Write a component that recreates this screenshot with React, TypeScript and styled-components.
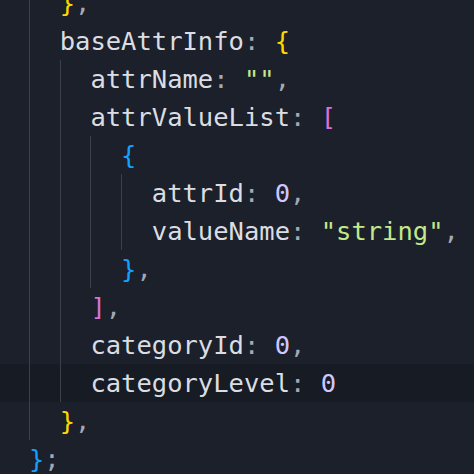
import React from "react";
import styled, { createGlobalStyle } from "styled-components";

const Global = createGlobalStyle`
  html, body { margin: 0; padding: 0; background: #1c202a; }
  body { overflow: hidden; }
`;

const Editor = styled.div`
  width: 474px;
  height: 474px;
  overflow: hidden;
  background: #1c202a;
  font-family: "DejaVu Sans Mono", "Liberation Mono", monospace;
  font-size: 25.5px;
  color: #d6d9de;
`;

const Lines = styled.div`
  margin-top: -16px;
  display: flex;
  flex-direction: column;
`;

const Line = styled.div<{ $active?: boolean }>`
  display: flex;
  height: 38px;
  line-height: 38px;
  padding-left: 29px;
  white-space: pre;
  background: ${(p) => (p.$active ? "#171b23" : "transparent")};
`;

const Indent = styled.span`
  display: inline-block;
  width: 2ch;
  height: 38px;
  flex: none;
  box-shadow: inset 1px 0 0 #3a404b;
`;

const Key = styled.span`
  color: #dadde2;
`;
const Punc = styled.span`
  color: #a3aab5;
`;
const Str = styled.span`
  color: #c3e88d;
`;
const Num = styled.span`
  color: #d2c6ff;
`;
const Bracket = styled.span<{ $c: "gold" | "orchid" | "blue" }>`
  color: ${(p) =>
    p.$c === "gold" ? "#ffd700" : p.$c === "orchid" ? "#da70d6" : "#179fff"};
`;

const Ind = ({ n }: { n: number }) => (
  <>
    {Array.from({ length: n }).map((_, i) => (
      <Indent key={i} />
    ))}
  </>
);

export default function App() {
  return (
    <Editor>
      <Global />
      <Lines>
        <Line>
          <Ind n={1} />
          <Bracket $c="gold">{"}"}</Bracket>
          <Punc>,</Punc>
        </Line>
        <Line>
          <Ind n={1} />
          <Key>baseAttrInfo</Key>
          <Punc>: </Punc>
          <Bracket $c="gold">{"{"}</Bracket>
        </Line>
        <Line>
          <Ind n={2} />
          <Key>attrName</Key>
          <Punc>: </Punc>
          <Str>""</Str>
          <Punc>,</Punc>
        </Line>
        <Line>
          <Ind n={2} />
          <Key>attrValueList</Key>
          <Punc>: </Punc>
          <Bracket $c="orchid">[</Bracket>
        </Line>
        <Line>
          <Ind n={3} />
          <Bracket $c="blue">{"{"}</Bracket>
        </Line>
        <Line>
          <Ind n={4} />
          <Key>attrId</Key>
          <Punc>: </Punc>
          <Num>0</Num>
          <Punc>,</Punc>
        </Line>
        <Line>
          <Ind n={4} />
          <Key>valueName</Key>
          <Punc>: </Punc>
          <Str>"string"</Str>
          <Punc>,</Punc>
        </Line>
        <Line>
          <Ind n={3} />
          <Bracket $c="blue">{"}"}</Bracket>
          <Punc>,</Punc>
        </Line>
        <Line>
          <Ind n={2} />
          <Bracket $c="orchid">]</Bracket>
          <Punc>,</Punc>
        </Line>
        <Line>
          <Ind n={2} />
          <Key>categoryId</Key>
          <Punc>: </Punc>
          <Num>0</Num>
          <Punc>,</Punc>
        </Line>
        <Line $active>
          <Ind n={2} />
          <Key>categoryLevel</Key>
          <Punc>: </Punc>
          <Num>0</Num>
        </Line>
        <Line>
          <Ind n={1} />
          <Bracket $c="gold">{"}"}</Bracket>
          <Punc>,</Punc>
        </Line>
        <Line>
          <Bracket $c="blue">{"}"}</Bracket>
          <Punc>;</Punc>
        </Line>
      </Lines>
    </Editor>
  );
}
